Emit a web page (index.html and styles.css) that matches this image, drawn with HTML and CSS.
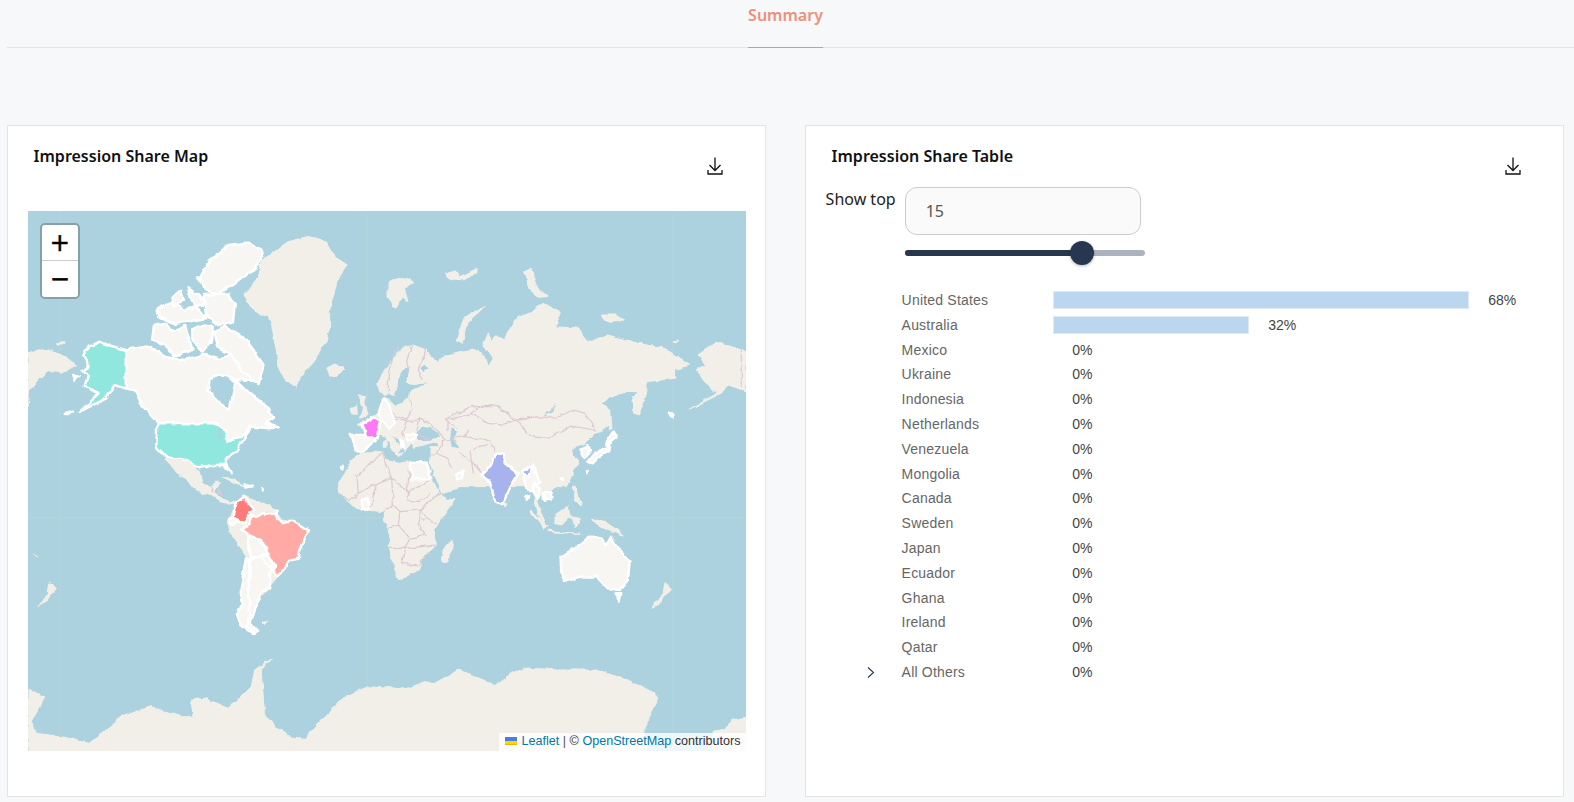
FILE: index.html
```html
<!DOCTYPE html>
<html lang="en">
<head>
<meta charset="utf-8">
<title>Summary</title>
<link rel="stylesheet" href="styles.css">
</head>
<body>
<nav class="tabs"><a class="tab">Summary</a></nav>
<main class="cards">
  <section class="card">
    <header class="card-head map-head">
      <h2 class="title">Impression Share Map</h2>
      <svg class="dl" viewBox="0 0 16 18"><path d="M8 .5V13M2.5 8 8 13.5 13.5 8M1 13v4h14v-4"/></svg>
    </header>
    <div class="map">
      <svg class="map-art" viewBox="28 211 718 540" preserveAspectRatio="none">
        <defs>
          <filter id="coast" x="0" y="0" width="100%" height="100%" filterUnits="objectBoundingBox" color-interpolation-filters="sRGB">
            <feTurbulence type="fractalNoise" baseFrequency="0.11" numOctaves="2" seed="7" result="n"/>
            <feDisplacementMap in="SourceGraphic" in2="n" scale="5" xChannelSelector="R" yChannelSelector="G" result="d"/>
            <feGaussianBlur in="d" stdDeviation="0.35"/>
          </filter>
        </defs>
        <rect class="sea" x="28" y="211" width="718" height="540"/>
        <path class="grat" d="M60 211V751M367 211V751M673 211V751M28 518H746"/>
        <g class="coast">
        <rect class="clear" x="28" y="211" width="718" height="540"/>
        <!-- North America -->
        <g transform="translate(28 210) scale(.3333)">
          <path class="land" d="M648 255 675 225 690 195 700 150 740 125 780 95 850 78 895 95 920 140 958 165 935 200 922 235 905 300 905 350 895 390 860 450 825 490 800 535 770 510 750 470 745 420 730 340 720 320 680 305Z"/>
          <path class="land" d="M895 475 920 462 950 475 925 500 905 495Z"/>
          <path class="land" d="M0 425 60 418 110 440 145 465 100 490 60 480 30 510 5 540 0 590Z"/>
          <path class="land" d="M90 395 108 392 105 402 90 402Z"/>
          <path class="hit" d="M293 420 340 412 365 408 410 440 470 450 530 435 575 445 610 435 650 445 700 465 690 515 625 510 665 550 720 590 737 625 712 640 750 652 722 655 670 650 640 680 597 692 595 662 560 640 390 640 345 590 320 540 293 535Z"/>
          <path class="hit sea-hole" d="M545 510 540 545 580 585 605 600 612 565 622 515 600 500 570 495Z"/>
          <path class="hit" d="M545 155 600 105 660 98 706 125 680 180 625 215 590 240 570 250 530 240 520 200 530 180Z"/>
          <path class="hit" d="M525 255 600 250 620 285 615 335 570 345 535 315Z"/>
          <path class="hit" d="M388 298 430 276 470 300 505 290 535 325 480 335 440 342 393 318Z"/>
          <path class="hit" d="M378 345 412 338 432 366 472 348 494 420 440 438 408 402 372 392Z"/>
          <path class="hit" d="M558 368 590 348 642 378 682 430 707 465 692 522 650 492 608 432 568 412Z"/>
          <path class="hit" d="M493 358 530 343 555 348 548 395 520 428 493 387Z"/>
          <path class="hit" d="M433 263 460 242 468 270 440 288Z"/>
          <path class="hit" d="M478 232 512 258 534 282 498 288Z"/>
          <path class="hit" d="M510 205 518 205 516 218Z"/>
          <path class="hit teal" d="M293 420 240 405 215 395 185 410 165 435 185 470 160 480 180 500 170 530 215 550 155 605 235 565 260 525 293 535Z"/>
          <path class="hit" d="M110 612 135 605 125 612Z"/>
          <path class="hit" d="M135 495 155 500 140 510Z"/>
          <path class="hit teal" d="M388 640 560 640 595 660 597 692 640 680 665 660 640 700 625 725 590 750 608 790 590 765 550 765 515 775 485 755 420 745 385 710Z"/>
          <path class="lake" d="M568 648 582 655 578 685 570 685Z"/>
        </g>
        <!-- Central America -->
        <g transform="translate(130 400) scale(.3333)">
          <path class="land" d="M105 178 180 185 208 215 215 245 240 262 262 242 268 252 252 275 280 295 300 310 325 305 320 315 290 315 245 285 200 270 160 235 130 200Z"/>
          <path class="land" d="M115 185 128 185 152 232 135 212Z"/>
          <path class="land" d="M280 232 310 235 340 258 300 242Z"/>
          <path class="hit" d="M340 250 370 258 345 263Z"/>
          <path class="hit" d="M395 265 402 268 397 272Z"/>
          <path class="border" d="M240 262 250 280M262 268 278 285"/>
        </g>
        <!-- South America -->
        <g transform="translate(220 490) scale(.3333)">
          <path class="land" d="M22 92 45 50 75 20 100 30 130 40 165 60 185 90 215 95 265 115 245 160 235 195 205 215 180 250 170 262 150 295 125 320 105 350 90 400 115 422 100 432 60 405 52 375 65 340 62 300 72 240 78 200 60 170 30 130Z"/>
          <path class="hit" d="M28 88 45 78 55 90 35 108 28 100Z"/>
          <path class="hit" d="M88 138 118 150 148 190 125 195 95 205 85 175Z"/>
          <path class="hit" d="M92 210 125 198 155 232 150 250 150 295 125 305 122 320 108 345 92 400 112 425 100 432 95 420 80 405 90 370 85 310 92 250Z"/>
          <path class="hit" d="M78 205 90 210 88 250 85 310 90 370 80 405 95 420 100 432 60 405 52 375 65 340 62 300 72 240Z"/>
          <path class="hit" d="M125 198 148 195 162 232 140 225Z"/>
          <path class="hit red" d="M74 20 56 36 44 52 38 82 74 100 88 72 104 62 84 42Z"/>
          <path class="hit salmon" d="M66 120 90 100 92 80 110 78 130 65 135 75 165 70 172 85 185 100 215 95 267 118 250 150 240 175 232 207 205 212 190 240 170 260 158 242 165 225 148 195 140 175 120 150 90 135Z"/>
          <path class="hit magenta" d="M165 62 173 62 172 72 166 72Z"/>
          <path class="land" d="M130 395 145 392 138 400Z"/>
        </g>
        <!-- Left half of Antarctica, New Zealand -->
        <g transform="translate(28 480) scale(.3333)">
          <path class="land" d="M0 628 50 650 30 690 10 720 25 760 100 770 180 790 215 765 250 740 270 715 320 695 370 680 400 690 460 710 495 710 490 660 530 655 600 685 640 650 670 620 680 570 730 535 700 570 705 640 710 710 780 770 830 775 890 710 950 650 1020 620 1080 625V830H0Z"/>
          <path class="land" d="M30 380 60 345 65 310 85 325 60 360Z"/>
          <path class="land" d="M705 425 722 422 715 430Z"/>
          <path class="land" d="M15 222 30 232 25 228Z"/>
        </g>
        <!-- Eurasia land masses -->
        <g transform="translate(388 210) scale(.3333)">
          <path class="land" d="M90 500 150 455 165 440 250 420 290 435 300 465 320 450 285 400 300 365 310 400 320 380 350 385 385 325 430 305 465 280 520 310 500 350 570 355 600 395 660 375 750 400 830 415 905 465 860 480 860 505 780 515 770 560 740 615 735 570 750 545 715 545 665 560 640 585 665 600 670 640 640 665 620 670 590 700 560 710 545 725 570 760 535 830 200 830Z"/>
          <path class="land" d="M0 215 50 200 78 215 50 240 60 275 40 265 22 295 0 260Z"/>
          <path class="land" d="M170 190 200 180 215 200 270 175 270 190 225 210 180 205Z"/>
          <path class="land" d="M205 390 230 320 290 290 240 335 225 400Z"/>
          <path class="land" d="M410 185 430 175 445 230 480 260 450 262 425 235Z"/>
          <path class="land" d="M640 315 680 315 710 330 650 335Z"/>
          <path class="land" d="M855 395 872 392 865 402Z"/>
          <path class="land" d="M930 435 985 397 1060 420 1074 425V545L1020 525 1000 550 900 600 990 545 960 530 925 480 950 465Z"/>
          <path class="land" d="M668 600 672 660 664 660Z"/>
        </g>
        <g transform="translate(480 400) scale(.3333)">
          <path class="land" d="M270 135 285 185 245 235 215 250 222 265 205 278 218 290 195 305 182 285 170 300 195 375 175 340 163 295 160 240 130 235 110 225 80 270 60 310 40 280 35 240 10 230 -51 216 -84 201 -100 100 200 -10 270 50Z"/>
        </g>
        <g transform="translate(330 450) scale(.3333)">
          <path class="land" d="M300 40 318 85 338 130 380 115 418 82 395 65 375 75 350 40 340 -10 300 -10Z"/>
        </g>
        <!-- Europe and the Near East -->
        <g transform="translate(330 340) scale(.3333)">
          <path class="land" d="M75 335 65 295 105 285 100 265 85 250 125 235 145 215 165 205 165 175 190 195 150 155 140 135 150 110 175 80 195 50 215 30 245 15 280 25 322 68 305 90 285 75 270 85 295 115 315 95 340 80 420 80 520 320 480 400 400 395 368 378 345 345 320 305 250 322 248 305 225 332 212 297 178 283 215 322 200 345 165 288 150 283 125 305 110 330Z"/>
          <path class="sea-fill" d="M255 280 280 260 305 265 330 290 300 300 265 300Z"/>
          <path class="sea-fill" d="M365 265 385 275 370 295 385 325 365 320 360 290Z"/>
          <path class="sea-fill" d="M240 85 222 88 205 115 203 140 195 165 175 160 160 170 178 178 195 195 235 175 240 155 295 130 250 135 228 130 232 110Z"/>
          <path class="land" d="M85 165 100 170 115 225 90 235 100 205Z"/>
          <path class="land" d="M60 210 80 195 82 220 65 225Z"/>
          <path class="land" d="M0 85 40 80 30 100 10 110 0 105Z"/>
          <path class="land" d="M160 305 170 300 172 322 160 322Z"/>
          <path class="land" d="M195 345 220 338 205 350Z"/>
          <path class="border" d="M205 20 190 50 175 100 175 160M245 15 230 60 235 90M280 25 285 40 265 90 280 120M240 175 245 210 230 240 200 230M175 205 200 230M190 235 230 245 270 235 310 260 345 300 400 290 420 270M230 245 215 280 240 305M270 235 260 275 300 300M340 300 340 320 310 345 300 345M345 240 420 200 510 200 565 245 600 232M345 240 385 265M400 290 480 300 495 340M420 330 430 400M430 330 470 310M385 335 430 370 460 405M320 340 350 355 365 385"/>
          <path class="hit" d="M160 175 175 190 190 235 195 255 178 265 160 245 145 222 150 205Z"/>
          <path class="hit" d="M62 285 110 285 135 298 120 315 100 335 78 335 70 300Z"/>
          <path class="hit" d="M228 285 260 285 252 300 232 302Z"/>
          <path class="hit" d="M210 298 218 305 222 325 215 320Z"/>
          <path class="hit" d="M30 384 36 382 34 388Z"/>
          <path class="hit magenta" d="M128 230 152 247 148 268 144 292 106 293 106 272 94 255 116 243Z"/>
        </g>
        <g transform="translate(388 210) scale(.3333)">
          <path class="hit" d="M845 608 858 612 852 620Z"/>
          <path class="border" d="M1060 420V530M250 610 280 585 330 590 385 630 450 620 500 625 555 600 590 610 625 660 560 650 550 650 480 685 430 680 385 630 340 645 300 640 250 610M250 610 180 630 180 660"/>
          <path class="lake-line" d="M470 618 495 600 500 580"/>
        </g>
        <!-- Africa -->
        <g transform="translate(330 450) scale(.3333)">
          <path class="land" d="M65 30 95 10 160 5 165 30 205 40 240 35 296 45 310 95 332 130 350 150 375 145 355 180 325 220 310 245 320 285 285 315 265 360 205 390 190 340 175 295 180 250 165 215 160 185 100 180 70 170 30 130 25 100 45 70Z"/>
          <path class="land" d="M365 270 370 285 350 335 335 330 340 295Z"/>
          <path class="border" d="M160 5 165 40 185 85 235 125 230 150 240 35M80 70 85 130 60 155 30 130M85 75 160 5M85 130 135 105 185 85M135 105 130 165 100 180M185 85 190 165 160 185M235 125 290 95 310 85M230 150 270 155 300 130M190 165 210 185 275 180 300 215 320 220M210 185 205 225 175 235M205 225 240 265 290 255M175 295 225 295 275 290 320 285M225 295 215 340 270 345 285 315M240 265 225 295M275 180 265 225 285 255M335 130 300 155 275 180"/>
          <path class="lake" d="M275 208 288 204 285 216Z"/>
          <path class="hit" d="M240 35 290 38 302 88 245 88Z"/>
          <path class="hit" d="M95 150 112 145 118 175 100 180Z"/>
          <path class="hit" d="M30 50 36 48 34 56Z"/>
          <path class="hit" d="M375 75 400 65 395 82 382 85Z"/>
        </g>
        <!-- South and East Asia -->
        <g transform="translate(480 400) scale(.3333)">
          <path class="land" d="M155 330 205 380 190 385 150 335Z"/>
          <path class="land" d="M205 390 270 400 300 400 205 395Z"/>
          <path class="land" d="M225 345 265 320 270 350 245 375 225 370Z"/>
          <path class="land" d="M270 350 300 355 285 380 278 362Z"/>
          <path class="land" d="M280 260 288 258 305 320 285 300Z"/>
          <path class="land" d="M335 358 380 365 430 405 390 395 350 375Z"/>
          <path class="land" d="M70 310 82 315 78 324Z"/>
          <path class="land" d="M460 0 495 0 475 45 462 40Z"/>
          <path class="hit" d="M135 220 160 200 180 245 160 270 145 270 130 240Z"/>
          <path class="hit" d="M165 250 180 265 170 295 160 280Z"/>
          <path class="hit" d="M190 280 215 280 210 300 195 300Z"/>
          <path class="hit" d="M305 145 322 135 328 160 315 175 305 165Z"/>
          <path class="hit" d="M325 185 345 160 380 145 385 115 405 95 410 110 390 125 385 155 350 175 335 190Z"/>
          <path class="hit" d="M318 210 323 212 320 216Z"/>
          <path class="hit" d="M245 235 251 235 248 240Z"/>
          <path class="hit" d="M135 290 145 285 140 300Z"/>
          <path class="hit" d="M570 40 582 44 575 50Z"/>
          <path class="hit periwinkle" d="M46 160 68 162 74 190 116 222 90 264 66 316 46 304 30 246 18 236 2 226 24 204 38 192Z"/>
          <path class="hit periwinkle" d="M128 215 158 196 148 230 128 224Z"/>
        </g>
        <!-- Oceania, right half of Antarctica -->
        <g transform="translate(388 480) scale(.3333)">
          <path class="land" d="M0 620 60 625 110 605 140 610 210 570 270 590 320 620 380 575 430 565 510 570 625 570 720 600 800 640 810 655 775 720 770 760 780 830H0Z"/>
          <path class="land" d="M975 758 1010 750 1030 720 1076 712V830H975Z"/>
          <path class="land" d="M830 310 850 325 820 360 795 385 800 365 825 345Z"/>
          <path class="land" d="M190 180 195 205 175 250 160 240 170 205Z"/>
          <path class="hit" d="M518 235 560 205 605 170 640 175 655 195 670 170 690 210 725 245 720 300 695 330 660 325 625 290 580 290 530 305 520 290Z"/>
          <path class="hit" d="M680 340 700 340 695 365Z"/>
        </g>
        </g>
      </svg>
      <div class="zoom">
        <button class="zoom-btn zoom-in">+</button>
        <button class="zoom-btn">−</button>
      </div>
      <div class="attr">
        <svg class="flag" viewBox="0 0 12 8"><path fill="#4C7BE1" d="M0 0h12v4H0z"/><path fill="#FFD500" d="M0 4h12v3H0z"/><path fill="#E0BC00" d="M0 7h12v1H0z"/></svg>
        <a class="link">Leaflet</a> <span class="sep">|</span> © <a class="link">OpenStreetMap</a> contributors
      </div>
    </div>
  </section>
  <section class="card">
    <header class="card-head table-head">
      <h2 class="title title-r">Impression Share Table</h2>
      <svg class="dl" viewBox="0 0 16 18"><path d="M8 .5V13M2.5 8 8 13.5 13.5 8M1 13v4h14v-4"/></svg>
    </header>
    <div class="show">
      <label class="show-label">Show top</label>
      <div class="show-ctl">
        <input class="show-input" value="15">
        <div class="slider"><div class="fill"></div><div class="thumb"></div></div>
      </div>
    </div>
    <div class="rows">
      <div class="row"><span class="label">United States</span><span class="bar w68"></span><span class="val">68%</span></div>
      <div class="row"><span class="label">Australia</span><span class="bar w32"></span><span class="val">32%</span></div>
      <div class="row"><span class="label">Mexico</span><span class="val">0%</span></div>
      <div class="row"><span class="label">Ukraine</span><span class="val">0%</span></div>
      <div class="row"><span class="label">Indonesia</span><span class="val">0%</span></div>
      <div class="row"><span class="label">Netherlands</span><span class="val">0%</span></div>
      <div class="row"><span class="label">Venezuela</span><span class="val">0%</span></div>
      <div class="row"><span class="label">Mongolia</span><span class="val">0%</span></div>
      <div class="row"><span class="label">Canada</span><span class="val">0%</span></div>
      <div class="row"><span class="label">Sweden</span><span class="val">0%</span></div>
      <div class="row"><span class="label">Japan</span><span class="val">0%</span></div>
      <div class="row"><span class="label">Ecuador</span><span class="val">0%</span></div>
      <div class="row"><span class="label">Ghana</span><span class="val">0%</span></div>
      <div class="row"><span class="label">Ireland</span><span class="val">0%</span></div>
      <div class="row"><span class="label">Qatar</span><span class="val">0%</span></div>
      <div class="row"><svg class="chev" viewBox="0 0 8 11"><path d="M1 .5 6.5 5.5 1 10.5"/></svg><span class="label">All Others</span><span class="val">0%</span></div>
    </div>
  </section>
</main>
</body>
</html>
```

FILE: styles.css
```css
* { box-sizing: border-box; }
html, body { margin: 0; height: 100%; }
body {
  background: #f6f8fa;
  font-family: "Noto Sans", Roboto, sans-serif;
  overflow: hidden;
}
.tabs {
  display: flex;
  height: 48px;
  margin-left: 7px;
  padding-left: 741px;
  border-bottom: 1px solid #e2e4e7;
}
.tab {
  width: 75px;
  height: 48px;
  border-bottom: 1px solid #e98f7b;
  color: #ee8f79;
  font-size: 16px;
  font-weight: 600;
  line-height: 30px;
  text-align: center;
}
.cards {
  display: grid;
  grid-template-columns: 759px 759px;
  gap: 39px;
  margin: 77px 0 0 6.6px;
}
.card {
  height: 671.6px;
  background: #fff;
  border: 1px solid #e2e4e7;
  padding: 20px 19px 0 20px;
}
.card-head {
  display: flex;
  justify-content: space-between;
  align-items: flex-start;
}
.map-head { height: 64.6px; }
.table-head { height: 40.6px; }
.title {
  margin: 0 0 0 6px;
  color: #111;
  font-size: 16px;
  font-weight: 600;
  line-height: 20px;
}
.title-r { margin-left: 6px; }
.dl {
  width: 16px;
  height: 18px;
  margin: 11px 23px 0 0;
  fill: none;
  stroke: #111;
  stroke-width: 1.3;
}
.map {
  position: relative;
  width: 718px;
  height: 540px;
  overflow: hidden;
}
.map-art { display: block; width: 100%; height: 100%; }
.coast { filter: url(#coast); }
.clear { fill: transparent; }
.sea { fill: #abd2de; }
.sea-fill { fill: #abd2de; }
.grat { fill: none; stroke: #b4d6dc; stroke-width: 1; }
.land { fill: #f2efe9; stroke: #f2efe9; stroke-width: 1; vector-effect: non-scaling-stroke; stroke-linejoin: round; }
.border { fill: none; stroke: #dcc9d3; stroke-width: 1.2; vector-effect: non-scaling-stroke; stroke-linejoin: round; }
.lake { fill: #abd2de; opacity: .8; }
.lake-line { fill: none; stroke: #abd2de; stroke-width: 1.5; vector-effect: non-scaling-stroke; }
.hit {
  fill: #f7f6f3;
  stroke: #fff;
  stroke-width: 2.4;
  stroke-linejoin: round;
  vector-effect: non-scaling-stroke;
}
.sea-hole { fill: #abd2de; }
.teal { fill: #90e7de; }
.red { fill: #ff7b79; }
.salmon { fill: #ffaaa5; }
.magenta { fill: #fc78f5; }
.periwinkle { fill: #a7b3ec; }
.zoom {
  position: absolute;
  top: 12px;
  left: 12.5px;
  width: 39.5px;
  border: 2px solid #87a0a8;
  border-radius: 5px;
  overflow: hidden;
}
.zoom-btn {
  display: block;
  width: 100%;
  height: 35.5px;
  padding: 0;
  border: 0;
  background: #fff;
  color: #000;
  font: 24px/37px "DejaVu Sans", sans-serif;
  -webkit-text-stroke: .5px #000;
}
.zoom-in { border-bottom: 1px solid #ccc; height: 36.5px; }
.attr {
  position: absolute;
  right: 0;
  bottom: 0;
  height: 18px;
  padding: 0 5px 0 6px;
  background: rgba(255, 255, 255, .8);
  color: #333;
  font: 12.6px/16px "Liberation Sans", sans-serif;
  white-space: nowrap;
}
.flag { width: 12px; height: 8px; margin-right: 1px; }
.link { color: #0078a8; }
.sep { color: #555; }
.show { display: flex; gap: 9px; }
.show-label {
  margin-top: 1px;
  color: #222;
  font-size: 16px;
  line-height: 22px;
}
.show-ctl { width: 240px; }
.show-input {
  display: block;
  width: 236px;
  height: 48px;
  padding: 0 20px;
  background: #fafafa;
  border: 1px solid #ccc;
  border-radius: 12px;
  color: #555;
  font: 16px "Noto Sans", Roboto, sans-serif;
}
.slider {
  position: relative;
  height: 6px;
  margin-top: 15px;
  background: #acb3bd;
  border-radius: 3px;
}
.fill {
  width: 177px;
  height: 6px;
  background: #26374f;
  border-radius: 3px;
}
.thumb {
  position: absolute;
  top: -9px;
  left: 165px;
  width: 24px;
  height: 24px;
  background: #26374f;
  border-radius: 50%;
  box-shadow: 0 1px 3px rgba(0, 0, 0, .3);
}
.rows { margin-top: 32px; padding-left: 76px; }
.row {
  position: relative;
  display: flex;
  align-items: center;
  height: 24.8px;
  color: #444;
  font: 14px "Liberation Sans", sans-serif;
}
.label { width: 151px; color: #666; letter-spacing: .2px; }
.bar {
  height: 18px;
  background: #bad7ef;
  border: 1px solid #e1e9f0;
}
.w68 { width: 416px; }
.w32 { width: 196px; }
.val { margin-left: 19.6px; }
.chev {
  position: absolute;
  left: -35px;
  top: 7px;
  width: 8px;
  height: 11px;
  fill: none;
  stroke: #26374f;
  stroke-width: 1.1;
}
```
